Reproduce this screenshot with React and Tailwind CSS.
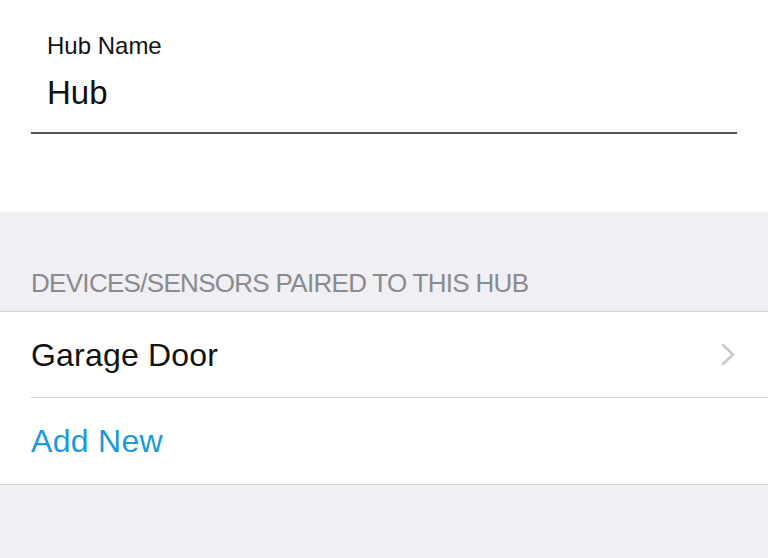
export default function App() {
  return (
    <div className="w-[768px] h-[558px] bg-[#efeff4] overflow-hidden font-['Liberation_Sans',sans-serif]">
      {/* Hub name field */}
      <div className="bg-white h-[212px] pt-[32px]">
        <div className="mx-[31px] border-b-2 border-[#555555] pb-[20px]">
          <div className="pl-[16px] text-[24px] leading-[28px] text-[#111111]">Hub Name</div>
          <div className="pl-[16px] mt-[14px] text-[33px] leading-[38px] text-[#111111]">Hub</div>
        </div>
      </div>

      {/* Section header */}
      <div className="h-[100px] flex items-end px-[31px] pb-[13px] border-b border-[#d6d6da]">
        <span className="text-[26px] leading-[30px] text-[#8a8a8f] tracking-[-0.7px]">
          DEVICES/SENSORS PAIRED TO THIS HUB
        </span>
      </div>

      {/* Rows */}
      <div className="bg-white border-b border-[#d6d6da]">
        <div className="h-[85px] flex items-center pl-[31px] pr-[33px]">
          <span className="flex-1 text-[32px] text-[#111111] tracking-[0.2px]">Garage Door</span>
          <svg width="14" height="23" viewBox="0 0 14 23" fill="none">
            <polyline points="2,2 12,11.5 2,21" stroke="#c7c7cc" strokeWidth="2.5" strokeLinecap="round" strokeLinejoin="round" />
          </svg>
        </div>
        <div className="ml-[31px] border-t border-[#d6d6da]" />
        <div className="h-[86px] flex items-center px-[31px]">
          <span className="text-[32px] text-[#1b9ad6] tracking-[0.3px]">Add New</span>
        </div>
      </div>
    </div>
  );
}
